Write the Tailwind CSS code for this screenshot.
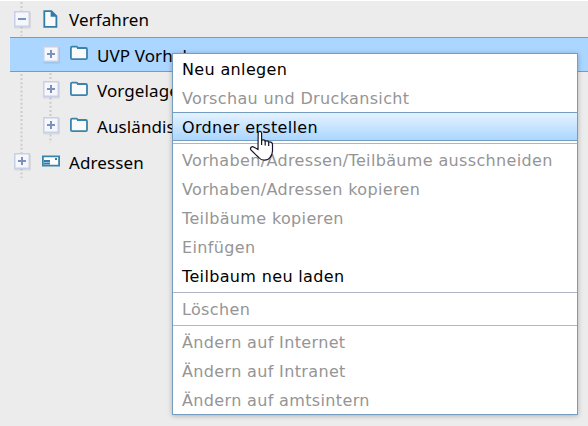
<!DOCTYPE html>
<html lang="de"><head><meta charset="utf-8"><title>Verfahren</title>
<script src="https://cdn.jsdelivr.net/npm/@tailwindcss/browser@4"></script></head>
<body class="w-[588px] h-[426px] overflow-hidden bg-[#ececec] border-t border-white relative text-black">
<svg class="hidden"><defs>
<symbol id="box" viewBox="0 0 20 20"><rect x="2" y="3" width="17" height="16.5" rx="1" fill="#000" opacity=".08"/><rect x="2.75" y="2.75" width="14.5" height="14.5" fill="#f6f7fc" stroke="#c8d0e6" stroke-width="1.5"/></symbol>
<symbol id="plus" viewBox="0 0 20 20"><use href="#box"/><path d="M6 10h8M10 6v8" stroke="#7c92bb" stroke-width="2"/></symbol>
<symbol id="minus" viewBox="0 0 20 20"><use href="#box"/><path d="M6 10h8" stroke="#7c92bb" stroke-width="2"/></symbol>
<symbol id="folder" viewBox="0 0 20 16"><path d="M1.900 13V2.900q0-1.200 1.200-1.200h4.400q.9 0 1.300 1.300h8q1.200 0 1.200 1.200V13q0 1.200-1.200 1.200H3.100q-1.200 0-1.200-1.200z" fill="#fafafa" stroke="#3a83ab" stroke-width="1.800"/></symbol>
</defs></svg>
<svg class="absolute left-0 top-0 w-[60px] h-[180px]" viewBox="0 1 60 180"><g stroke="#cbcbcb" stroke-width="2" stroke-dasharray="2 2.1" fill="none"><path d="M21.500 2v34M21.500 74v104M50.500 73v70"/></g></svg>
<div class="relative w-full [font-family:'Noto_Sans',sans-serif] text-[17px] tracking-[0.1px] leading-[36px]">
<div class="h-9 flex items-center pl-3"><svg class="w-5 h-5 -mt-px"><use href="#minus"/></svg><svg class="ml-[10px] w-4 h-5" viewBox="0 0 16 20"><path d="M2.300 2.100h7.100l5 5v10.800H2.300z" fill="#fafafa" stroke="#2f7da8" stroke-width="1.800"/><path d="M8.600 1.500v6.300h6.200z" fill="#2f7da8"/></svg><span class="ml-[11px] pt-[2px]">Verfahren</span></div>
<div class="h-[35px] ml-[10px] flex items-center bg-[#abd6ff] border-y border-[#759dc0] pl-[31px]"><svg class="w-5 h-5 -mt-[2px]"><use href="#plus"/></svg><svg class="ml-2 w-5 h-4 -mt-[3px]"><use href="#folder"/></svg><span class="ml-2 pt-[2px]">UVP Vorhaben</span></div>
<div class="h-9 ml-[10px] flex items-center pl-[31px]"><svg class="w-5 h-5 -mt-[2px]"><use href="#plus"/></svg><svg class="ml-2 w-5 h-4 -mt-[2px]"><use href="#folder"/></svg><span class="ml-2 pt-[2px]">Vorgelagerte</span></div>
<div class="h-9 ml-[10px] flex items-center pl-[31px]"><svg class="w-5 h-5 -mt-[2px]"><use href="#plus"/></svg><svg class="ml-2 w-5 h-4 -mt-[2px]"><use href="#folder"/></svg><span class="ml-2 pt-[2px]">Ausländische</span></div>
<div class="h-9 flex items-center pl-3"><svg class="w-5 h-5 -mt-[2px]"><use href="#plus"/></svg><svg class="ml-[9px] w-5 h-4 -mt-[2px]" viewBox="0 0 20 16"><path d="M1.900 3.300h16.200v9.400H1.900z" fill="#fff" stroke="#3a83ab" stroke-width="1.800"/><path d="M3 8h6M3 10.500h6" stroke="#2f7da8" stroke-width="1.800"/><path d="M14 5h2v2h-2z" fill="#2f7da8"/></svg><span class="ml-2 pt-[2px]">Adressen</span></div>
</div>
<div class="absolute left-[172px] top-[52px] w-[406px] h-[362px] bg-white border border-[#759dc0] shadow-[0_1px_5px_rgba(0,0,0,0.25)] [font-family:'DejaVu_Sans',Verdana,sans-serif] text-[16px] tracking-[0.35px] leading-[31px] text-[#959595] whitespace-nowrap [&>p]:h-[29px] [&>p]:pl-[9px] [&>hr]:h-px [&>hr]:border-0 [&>hr]:bg-[#b1b5c9] [&>hr]:mt-[2px] [&>hr]:mb-px">
<p class="text-black">Neu anlegen</p><p>Vorschau und Druckansicht</p><p class="text-black bg-linear-to-b from-[#e5f2ff] to-[#abd6ff] border-y border-[#759dc0] leading-[29px]">Ordner erstellen</p><hr>
<p>Vorhaben/Adressen/Teilbäume ausschneiden</p><p>Vorhaben/Adressen kopieren</p><p>Teilbäume kopieren</p><p>Einfügen</p><p class="text-black">Teilbaum neu laden</p><hr><p>Löschen</p><hr><p>Ändern auf Internet</p><p>Ändern auf Intranet</p><p>Ändern auf amtsintern</p>
</div>
<svg class="absolute left-[249px] top-[128px] w-[27px] h-[34px]" viewBox="0 0 27 34"><path d="M9.200 3.500c.8-1.700 3.400-1.400 3.400.8v7c1.400-.9 3-.6 3.600.8 1.300-.6 2.900-.3 3.500 1.100 2-.7 3.800.4 3.800 2.200v6.500q0 3.500-2.500 6.600c-2.500 3.600-8.500 3.400-10.800.5L1.900 21c-1.300-2.300 1-4.300 3.200-2.800L9 20.500z" fill="#fff" stroke="#15152a" stroke-width="1.200"/><path d="M12.600 11v5M16.200 12v4.500M19.700 13v4" stroke="#15152a" stroke-width="1.200"/></svg>
</body></html>
